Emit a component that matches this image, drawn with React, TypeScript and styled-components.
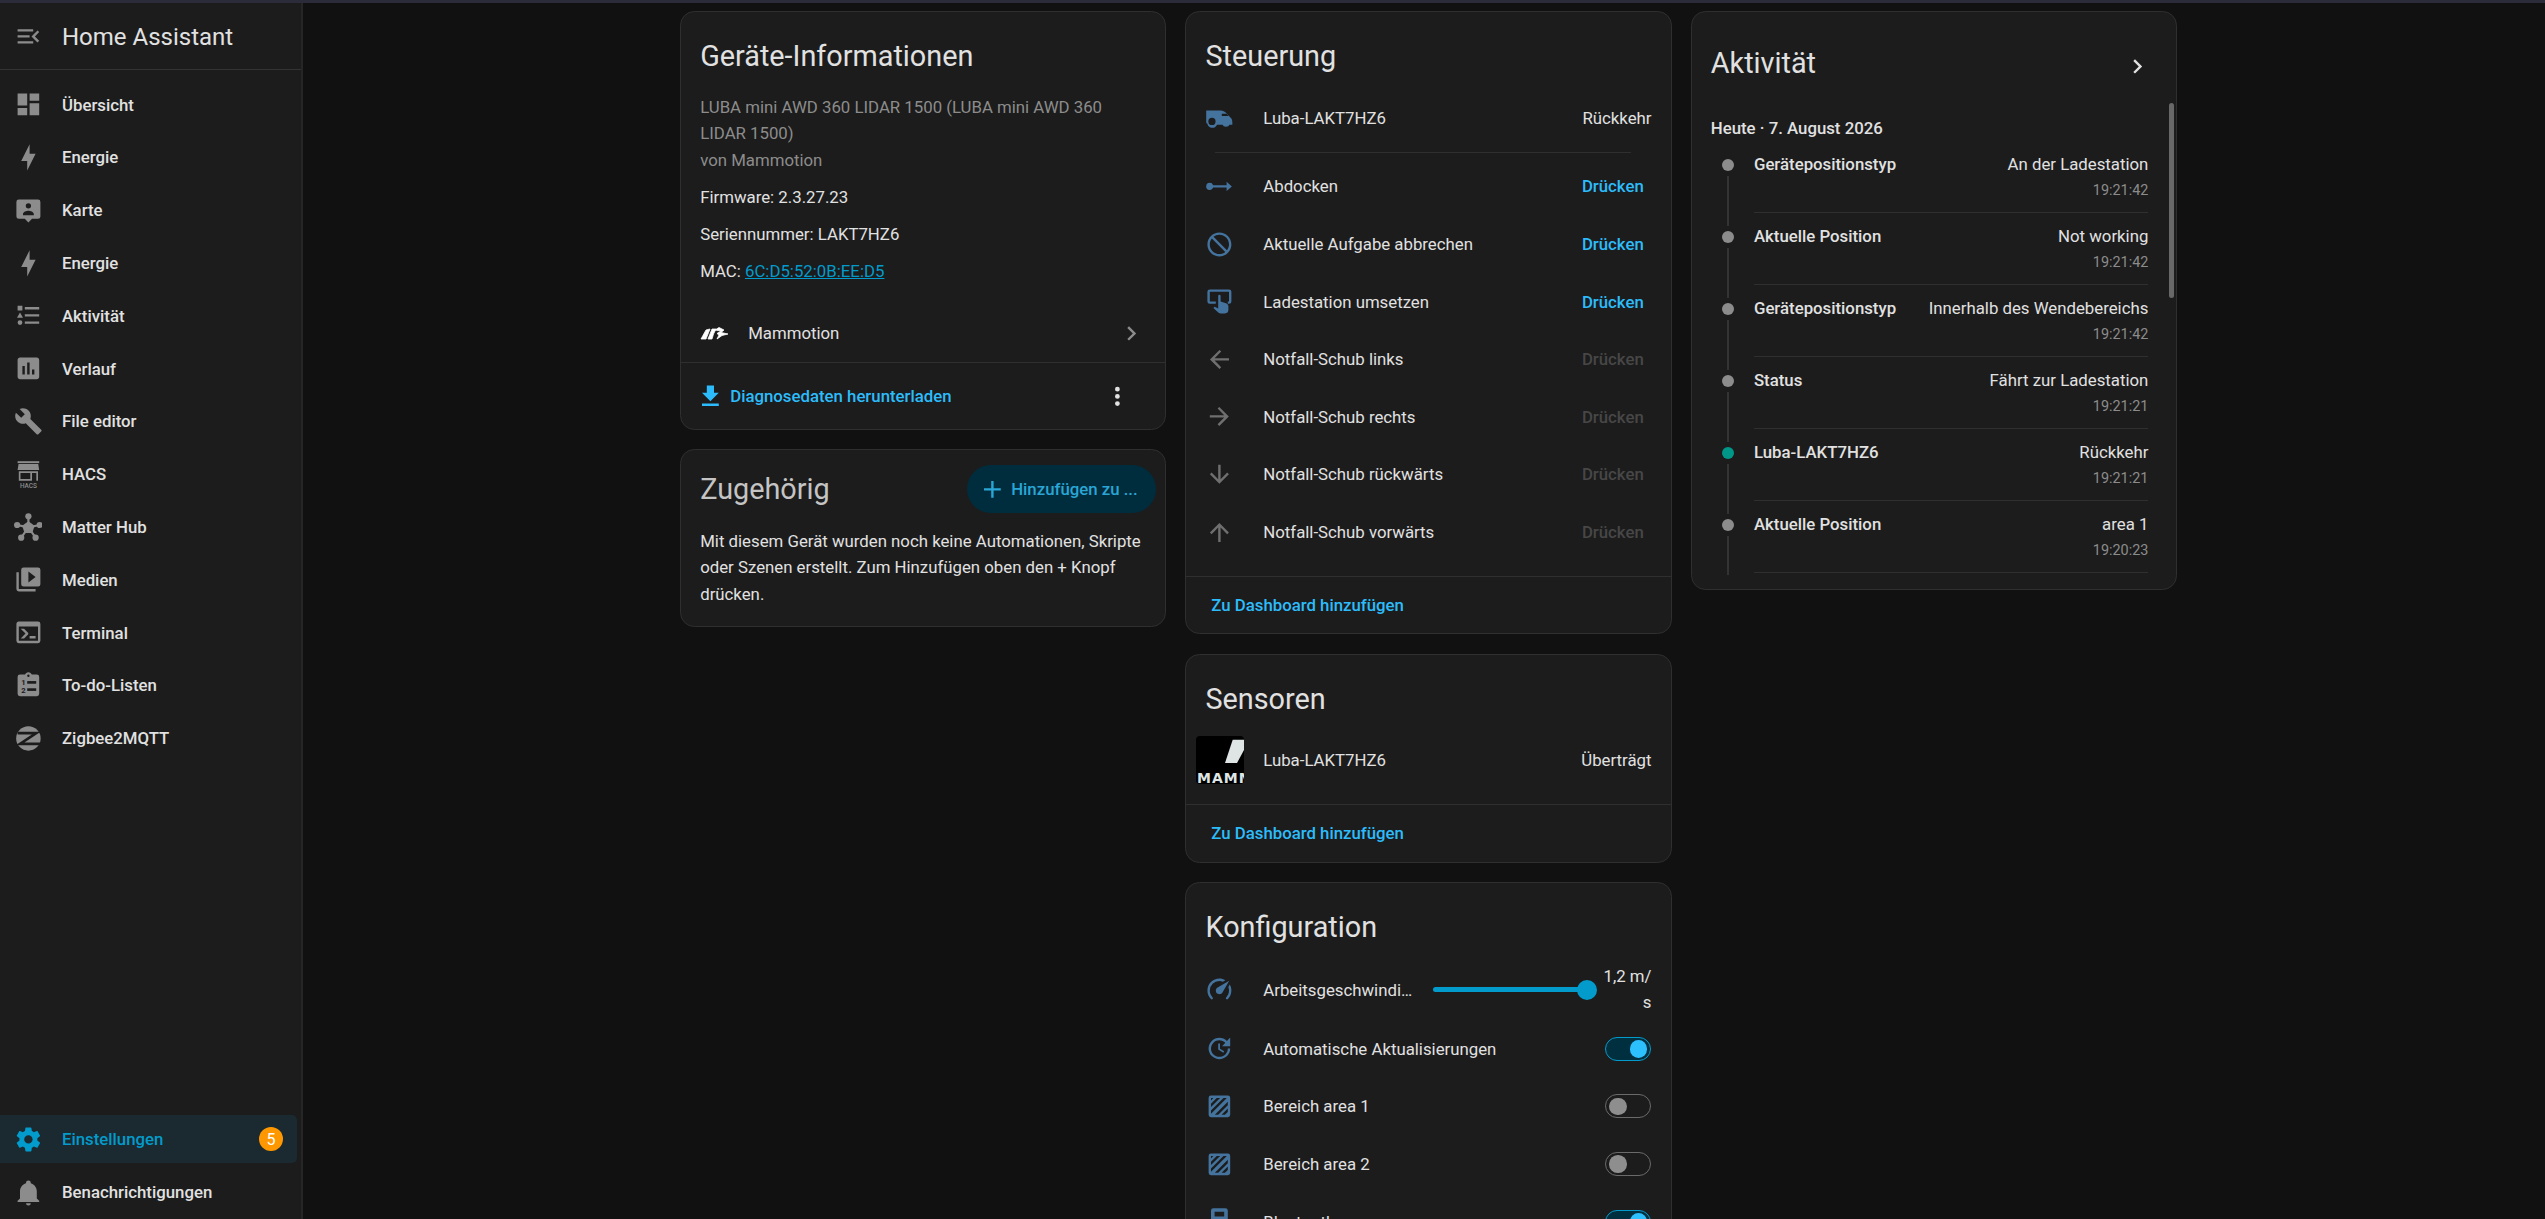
import React from 'react';
import styled, { createGlobalStyle } from 'styled-components';

const mdi = {
  menuOpen: 'M21,15.61L19.59,17L14.58,12L19.59,7L21,8.39L17.44,12L21,15.61M3,6H16V8H3V6M3,13V11H13V13H3M3,18V16H16V18H3Z',
  dashboard: 'M13,3V9H21V3M13,21H21V11H13M3,21H11V15H3M3,13H11V3H3V13Z',
  bolt: 'M11 15H6L13 1V9H18L11 23V15Z',
  map: 'M4 3H20A2 2 0 0 1 22 5V17A2 2 0 0 1 20 19H15L12 22L9 19H4A2 2 0 0 1 2 17V5A2 2 0 0 1 4 3ZM12 6A2.2 2.2 0 1 0 12 10.4 2.2 2.2 0 0 0 12 6ZM7.5 16H16.5V15C16.5 13.2 13.5 12.2 12 12.2 10.5 12.2 7.5 13.2 7.5 15Z',
  list: 'M5,9.5L7.5,14H2.5L5,9.5M3,4H7V8H3V4M5,20A2,2 0 0,0 7,18A2,2 0 0,0 5,16A2,2 0 0,0 3,18A2,2 0 0,0 5,20M9,5V7H21V5H9M9,19H21V17H9V19M9,13H21V11H9V13Z',
  chart: 'M19 3H5C3.9 3 3 3.9 3 5V19C3 20.1 3.9 21 5 21H19C20.1 21 21 20.1 21 19V5C21 3.9 20.1 3 19 3M9 17H7V10H9V17M13 17H11V7H13V17M17 17H15V13H17V17Z',
  wrench: 'M22.7,19L13.6,9.9C14.5,7.6 14,4.9 12.1,3C10.1,1 7.1,0.6 4.7,1.7L9,6L6,9L1.6,4.7C0.4,7.1 0.9,10.1 2.9,12.1C4.8,14 7.5,14.5 9.8,13.6L18.9,22.7C19.3,23.1 19.9,23.1 20.3,22.7L22.6,20.4C23.1,20 23.1,19.3 22.7,19Z',
  media: 'M4,6H2V20A2,2 0 0,0 4,22H18V20H4V6M20,2H8A2,2 0 0,0 6,4V16A2,2 0 0,0 8,18H20A2,2 0 0,0 22,16V4A2,2 0 0,0 20,2M12,14.5V5.5L18,10L12,14.5Z',
  console: 'M20,19V7H4V19H20M20,3A2,2 0 0,1 22,5V19A2,2 0 0,1 20,21H4A2,2 0 0,1 2,19V5C2,3.89 2.9,3 4,3H20M13,17V15H18V17H13M9.58,13L5.57,9H8.4L11.7,12.3C12.09,12.69 12.09,13.33 11.7,13.72L8.42,17H5.59L9.58,13Z',
  clipboard: 'M19,3H14.82C14.4,1.84 13.3,1 12,1C10.7,1 9.6,1.84 9.18,3H5A2,2 0 0,0 3,5V19A2,2 0 0,0 5,21H19A2,2 0 0,0 21,19V5A2,2 0 0,0 19,3M12,3A1,1 0 0,1 13,4A1,1 0 0,1 12,5A1,1 0 0,1 11,4A1,1 0 0,1 12,3Z',
  cog: 'M12,15.5A3.5,3.5 0 0,1 8.5,12A3.5,3.5 0 0,1 12,8.5A3.5,3.5 0 0,1 15.5,12A3.5,3.5 0 0,1 12,15.5M19.43,12.97C19.47,12.65 19.5,12.33 19.5,12C19.5,11.67 19.47,11.34 19.43,11L21.54,9.37C21.73,9.22 21.78,8.95 21.66,8.73L19.66,5.27C19.54,5.05 19.27,4.96 19.05,5.05L16.56,6.05C16.04,5.66 15.5,5.32 14.87,5.07L14.5,2.42C14.46,2.18 14.25,2 14,2H10C9.75,2 9.54,2.18 9.5,2.42L9.13,5.07C8.5,5.32 7.96,5.66 7.44,6.05L4.95,5.05C4.73,4.96 4.46,5.05 4.34,5.27L2.34,8.73C2.21,8.95 2.27,9.22 2.46,9.37L4.57,11C4.53,11.34 4.5,11.67 4.5,12C4.5,12.33 4.53,12.65 4.57,12.97L2.46,14.63C2.27,14.78 2.21,15.05 2.34,15.27L4.34,18.73C4.46,18.95 4.73,19.03 4.95,18.95L7.44,17.94C7.96,18.34 8.5,18.68 9.13,18.93L9.5,21.58C9.54,21.82 9.75,22 10,22H14C14.25,22 14.46,21.82 14.5,21.58L14.87,18.93C15.5,18.67 16.04,18.34 16.56,17.94L19.05,18.95C19.27,19.03 19.54,18.95 19.66,18.73L21.66,15.27C21.78,15.05 21.73,14.78 21.54,14.63L19.43,12.97Z',
  bell: 'M21,19V20H3V19L5,17V11C5,7.9 7.03,5.17 10,4.29C10,4.19 10,4.1 10,4A2,2 0 0,1 12,2A2,2 0 0,1 14,4C14,4.1 14,4.19 14,4.29C16.97,5.17 19,7.9 19,11V17L21,19M14,21A2,2 0 0,1 12,23A2,2 0 0,1 10,21',
  download: 'M5,20H19V18H5M19,9H15V3H9V9H5L12,16L19,9Z',
  dots: 'M12,16A2,2 0 0,1 14,18A2,2 0 0,1 12,20A2,2 0 0,1 10,18A2,2 0 0,1 12,16M12,10A2,2 0 0,1 14,12A2,2 0 0,1 12,14A2,2 0 0,1 10,12A2,2 0 0,1 12,10M12,4A2,2 0 0,1 14,6A2,2 0 0,1 12,8A2,2 0 0,1 10,6A2,2 0 0,1 12,4Z',
  chevron: 'M8.59,16.58L13.17,12L8.59,7.41L10,6L16,12L10,18L8.59,16.58Z',
  plus: 'M19,13H13V19H11V13H5V11H11V5H13V11H19V13Z',
  van: 'M1 5.5H13C15 5.5 17 6.5 19 9L22 12C22.6 13 22.8 14 22.8 16V17.2H20.4A3 2.4 0 0 1 14.6 17.2H10A4.2 4.2 0 0 1 2 16.4A1 1 0 0 1 1 15.5ZM14 8.2H18L19.6 10H14ZM5.8 11.5A3 3 0 1 0 5.8 17.5 3 3 0 0 0 5.8 11.5Z',
  ray: 'M4 9A3 3 0 0 1 6.8 11H18V8.2L22.4 12 18 15.8V13H6.8A3 3 0 1 1 4 9Z',
  cancel: 'M12 2C17.5 2 22 6.5 22 12S17.5 22 12 22 2 17.5 2 12 6.5 2 12 2M12 4C10.1 4 8.4 4.6 7.1 5.7L18.3 16.9C19.3 15.5 20 13.8 20 12C20 7.6 16.4 4 12 4M16.9 18.3L5.7 7.1C4.6 8.4 4 10.1 4 12C4 16.4 7.6 20 12 20C13.9 20 15.6 19.4 16.9 18.3Z',
  hand: 'M11 7.5A1 1 0 0 1 13 7.5V12L17.5 13.5C18.7 13.9 19.5 14.8 19.5 16.1V19A3 3 0 0 1 16.5 22H13C12 22 11.2 21.6 10.6 20.9L7 17.5L8 16.5L11 18Z',
  arrowLeft: 'M20,11V13H8L13.5,18.5L12.08,19.92L4.16,12L12.08,4.08L13.5,5.5L8,11H20Z',
  arrowRight: 'M4,11V13H16L10.5,18.5L11.92,19.92L19.84,12L11.92,4.08L10.5,5.5L16,11H4Z',
  arrowDown: 'M11,4H13V16L18.5,10.5L19.92,11.92L12,19.84L4.08,11.92L5.5,10.5L11,16V4Z',
  arrowUp: 'M13,20H11V8L5.5,13.5L4.08,12.08L12,4.16L19.92,12.08L18.5,13.5L13,8V20Z',
  speed: 'M12,16A3,3 0 0,1 9,13C9,11.88 9.61,10.9 10.5,10.39L20.21,4.77L14.68,14.35C14.18,15.33 13.17,16 12,16M12,3C13.81,3 15.5,3.5 16.97,4.32L14.87,5.53C14,5.19 13,5 12,5A8,8 0 0,0 4,13C4,15.21 4.89,17.21 6.34,18.65H6.35C6.74,19.04 6.74,19.67 6.35,20.06C5.96,20.45 5.32,20.45 4.93,20.07V20.07C3.12,18.26 2,15.76 2,13A10,10 0 0,1 12,3M22,13C22,15.76 20.88,18.26 19.07,20.07V20.07C18.68,20.45 18.05,20.45 17.66,20.06C17.27,19.67 17.27,19.04 17.66,18.65V18.65C19.11,17.2 20,15.21 20,13C20,12 19.81,11 19.46,10.1L20.67,8C21.5,9.5 22,11.18 22,13Z',
  update: 'M21,10.12H14.22L16.96,7.3C14.23,4.6 9.81,4.5 7.08,7.2C4.35,9.91 4.35,14.28 7.08,17C9.81,19.7 14.23,19.7 16.96,17C18.32,15.65 19,14.08 19,12.1H21C21,14.08 20.12,16.65 18.36,18.39C14.85,21.87 9.15,21.87 5.64,18.39C2.14,14.92 2.11,9.28 5.62,5.81C9.13,2.34 14.76,2.34 18.27,5.81L21,3V10.12M12.5,8V12.25L16,14.33L15.28,15.54L11,13V8H12.5Z',
  texture: 'M5 3H19A2 2 0 0 1 21 5V19A2 2 0 0 1 19 21H5A2 2 0 0 1 3 19V5A2 2 0 0 1 5 3ZM5 5V7L7 5ZM5 9.8V12.6L12.6 5H9.8ZM5 15.4V18.2L18.2 5H15.4ZM19 8.2L8.2 19H11L19 11ZM19 13.8L13.8 19H16.6L19 16.6Z',
  bluetooth: 'M7 1H17A2 2 0 0 1 19 3V21A2 2 0 0 1 17 23H7A2 2 0 0 1 5 21V3A2 2 0 0 1 7 1ZM8 4V8H16V4Z',
};

const BLUE = '#44739e';
const GRAY = '#8c8c8c';
const PRIMARY = '#2cbcfb';
const ACTIVE = '#039bcb';

const Global = createGlobalStyle`
  html, body { margin: 0; padding: 0; background: #111111; }
  body {
    font-family: Roboto, 'Liberation Sans', sans-serif;
    font-size: 16.8px;
    color: #e1e1e1;
    overflow: hidden;
  }
  * { box-sizing: border-box; }
`;

const Page = styled.div`
  height: 100vh;
  display: flex;
  flex-direction: column;
  overflow: hidden;
`;

const TopStrip = styled.div`
  height: 3px;
  flex: none;
  background: #2b2b3a;
`;

const Shell = styled.div`
  flex: 1;
  min-height: 0;
  display: flex;
`;

const Sidebar = styled.nav`
  width: 303px;
  flex: none;
  display: flex;
  flex-direction: column;
  background: #1c1c1c;
  border-right: 2px solid #262626;
  padding-bottom: 3px;
`;

const SideHeader = styled.div`
  height: 67px;
  display: flex;
  align-items: center;
  padding-left: 13.6px;
  border-bottom: 1px solid #333333;
  margin-bottom: 10.6px;
`;

const SideTitle = styled.div`
  margin: 2px 0 0 19.6px;
  font-size: 24px;
  color: #e1e1e1;
`;

const SideList = styled.div`
  display: flex;
  flex-direction: column;
  gap: 4.8px;
`;

const SideFoot = styled(SideList)`
  margin-top: auto;
`;

const SideItem = styled.div<{ $active?: boolean }>`
  height: 48px;
  width: 297px;
  display: flex;
  align-items: center;
  padding-left: 13.6px;
  border-radius: 0 5px 5px 0;
  background: ${p => (p.$active ? '#1a2a30' : 'transparent')};
  color: ${p => (p.$active ? ACTIVE : '#e1e1e1')};
  font-weight: 500;
  font-size: 16.8px;
`;

const SideLabel = styled.span`
  margin-left: 19.6px;
  flex: 1;
`;

const Badge = styled.span`
  width: 24px;
  height: 24px;
  border-radius: 50%;
  margin-right: 14px;
  background: #ff9800;
  color: #ffffff;
  font-size: 16px;
  font-weight: 400;
  display: flex;
  align-items: center;
  justify-content: center;
`;

const Svg = styled.svg<{ $color: string; $size?: number }>`
  width: ${p => p.$size ?? 28.8}px;
  height: ${p => p.$size ?? 28.8}px;
  flex: none;
  fill: ${p => p.$color};
  display: block;
`;

const Icon = ({ d, color = GRAY, size }: { d: string; color?: string; size?: number }) => (
  <Svg viewBox="0 0 24 24" $color={color} $size={size}>
    <path d={d} fillRule="evenodd" />
  </Svg>
);

const HacsText = styled.text`
  font-family: Roboto, sans-serif;
  font-size: 5.4px;
  text-anchor: middle;
  fill: ${GRAY};
`;

const HacsIcon = () => (
  <Svg viewBox="0 0 24 24" $color={GRAY}>
    <rect x="3" y="1" width="18" height="1.6" />
    <path d="M3.8 3.4H20.2L21 8.4H3Z" />
    <path d="M4 9.4H20V17.2H18.6V10.8H15V17.2H4ZM5.4 10.8V15.8H13.6V10.8Z" fillRule="evenodd" />
    <HacsText x="12" y="23">HACS</HacsText>
  </Svg>
);

const HubLines = styled.path`
  fill: none;
  stroke: ${GRAY};
  stroke-width: 1.8;
`;

const HubIcon = () => (
  <Svg viewBox="0 0 24 24" $color={GRAY}>
    <circle cx="12" cy="2.8" r="2.6" />
    <circle cx="2.6" cy="10" r="2.6" />
    <circle cx="21.4" cy="10" r="2.6" />
    <circle cx="6" cy="20.6" r="2.6" />
    <circle cx="18" cy="20.6" r="2.6" />
    <path d="M12 6.8L17.2 10.6 15.2 16.6H8.8L6.8 10.6Z" />
    <HubLines d="M12 3V12M2.6 10L12 12M21.4 10L12 12M6 20.6L12 12M18 20.6L12 12" />
  </Svg>
);

const TodoDigit = styled.text`
  font-family: Roboto, sans-serif;
  font-size: 6.4px;
  font-weight: 700;
  fill: #1c1c1c;
`;

const TodoBar = styled.rect`
  fill: #1c1c1c;
`;

const TodoIcon = () => (
  <Svg viewBox="0 0 24 24" $color={GRAY}>
    <path d={mdi.clipboard} fillRule="evenodd" />
    <TodoDigit x="6" y="12">1</TodoDigit>
    <TodoDigit x="6" y="18.6">2</TodoDigit>
    <TodoBar x="11" y="8.4" width="7.5" height="2.2" />
    <TodoBar x="11" y="14.4" width="7.5" height="2.2" />
  </Svg>
);

const ZigbeeStroke = styled.path`
  fill: none;
  stroke: #1c1c1c;
  stroke-width: 2.2;
`;

const ZigbeeIcon = () => (
  <Svg viewBox="0 0 24 24" $color={GRAY}>
    <circle cx="12" cy="12" r="10.2" />
    <ZigbeeStroke d="M3 7.6H18.6L5 16.6H22" />
  </Svg>
);

const RelocateFrame = styled.path`
  fill: none;
  stroke: ${BLUE};
  stroke-width: 2;
`;

const RelocateIcon = () => (
  <Svg viewBox="0 0 24 24" $color={BLUE}>
    <RelocateFrame d="M9 13H4A1 1 0 0 1 3 12V4A1 1 0 0 1 4 3H20A1 1 0 0 1 21 4V12A1 1 0 0 1 20 13H19" />
    <path d={mdi.hand} />
  </Svg>
);

const LogoSvg = styled.svg`
  width: 28px;
  height: 13px;
  flex: none;
  fill: #ffffff;
  stroke: #ffffff;
  stroke-width: 0.8;
`;

const MammotionLogo = () => (
  <LogoSvg viewBox="0 0 28 13">
    <polygon points="1,12 6,3 10,2 6,12" />
    <polygon points="8,12 12,2 16,2 13.5,7 12,12" />
    <polygon points="15,3 19,0.5 24,3 21,5.5 28,7 22,8.5 17,12 19,8 17,6.5 21,4" />
  </LogoSvg>
);

const BrandImage = styled.svg`
  width: 48px;
  height: 48px;
  flex: none;
  border-radius: 4px;
  background: #000000;
`;

const BrandText = styled.text`
  font-family: 'DejaVu Sans', sans-serif;
  font-weight: 700;
  font-size: 14px;
  letter-spacing: 1px;
  fill: #dfe5e5;
`;

const BrandSlash = styled.polygon`
  fill: #dfe5e5;
`;

const BrandIcon = () => (
  <BrandImage viewBox="0 0 48 48">
    <BrandSlash points="36.7,3.7 48,3.7 48,14 41,27 29,27" />
    <BrandText x="1" y="47">MAMMOTION</BrandText>
  </BrandImage>
);

const Main = styled.main`
  flex: 1;
  min-width: 0;
  padding: 8.4px 0 0 377px;
  display: grid;
  grid-template-columns: repeat(3, 486.4px);
  column-gap: 18.9px;
  align-items: start;
  overflow: hidden;
`;

const Column = styled.div`
  display: flex;
  flex-direction: column;
  gap: 19.2px;
`;

const Card = styled.section`
  position: relative;
  background: #1c1c1c;
  border: 1px solid #2f2f2f;
  border-radius: 14.4px;
  overflow: hidden;
`;

const CardTitle = styled.h2`
  margin: 0;
  padding: 25px 19.2px 0;
  font-size: 28.8px;
  font-weight: 400;
  line-height: 38.4px;
  color: #e1e1e1;
`;

const Info = styled.div`
  padding: 17.8px 19.2px 19.4px;
  line-height: 26.88px;
`;

const InfoMuted = styled.div`
  color: #8c8c8c;
`;

const InfoLine = styled.div`
  margin-top: 10px;
`;

const MacLink = styled.a`
  color: ${ACTIVE};
  text-decoration: underline;
`;

const BrandRow = styled.div`
  height: 57.6px;
  padding: 0 19.2px;
  display: flex;
  align-items: center;
`;

const BrandLabel = styled.span`
  margin-left: 20px;
  flex: 1;
`;

const CardFoot = styled.div`
  height: 67.2px;
  border-top: 1px solid #2f2f2f;
  padding: 0 34px 0 15.4px;
  display: flex;
  align-items: center;
`;

const FootAction = styled.span`
  margin-left: 5px;
  flex: 1;
  color: ${PRIMARY};
  font-weight: 500;
`;

const RelatedHead = styled.div`
  height: 63px;
  padding: 15px 9.6px 0 19.2px;
  display: flex;
  align-items: flex-start;
  justify-content: space-between;
`;

const RelatedTitle = styled.h2`
  margin: 0;
  font-size: 28.8px;
  font-weight: 400;
  line-height: 48px;
  color: #c4c4c4;
`;

const AddButton = styled.div`
  width: 189px;
  height: 48px;
  border-radius: 24px;
  background: #002d3d;
  color: #2aa6d6;
  font-weight: 500;
  display: flex;
  align-items: center;
  padding-left: 11px;
`;

const AddLabel = styled.span`
  margin-left: 4.6px;
`;

const RelatedText = styled.p`
  margin: 14.6px 0 0;
  padding: 0 19.2px 19.2px;
  line-height: 26.4px;
  color: #e1e1e1;
`;

const Rows = styled.div`
  padding: 13.4px 0 15px;
`;

const Row = styled.div<{ $grow?: number }>`
  height: ${p => p.$grow ?? 57.6}px;
  padding: 0 19.2px;
  display: flex;
  align-items: center;
`;

const RowIcon = styled.div`
  width: 28.8px;
  flex: none;
  display: flex;
  justify-content: center;
`;

const RowLabel = styled.div`
  margin-left: 29px;
  flex: 1;
  min-width: 0;
  white-space: nowrap;
`;

const RowValue = styled.div`
  text-align: right;
`;

const PressLabel = styled.div<{ $disabled?: boolean }>`
  margin-right: 7.7px;
  font-weight: 500;
  color: ${p => (p.$disabled ? '#474747' : PRIMARY)};
`;

const RowRule = styled.div`
  height: 1px;
  margin: 5px 40px 4.8px 28.6px;
  background: #2f2f2f;
`;

const AddToDash = styled.div`
  height: 57.6px;
  border-top: 1px solid #2f2f2f;
  padding-left: 25px;
  display: flex;
  align-items: center;
  color: ${PRIMARY};
  font-weight: 500;
`;

const SliderLabel = styled(RowLabel)`
  flex: none;
  width: 152px;
  overflow: hidden;
  text-overflow: ellipsis;
`;

const SliderTrack = styled.div`
  position: relative;
  width: 154px;
  height: 5px;
  margin-left: 18px;
  flex: none;
  border-radius: 3px;
  background: ${ACTIVE};
`;

const SliderThumb = styled.div`
  position: absolute;
  right: -10px;
  top: -7.5px;
  width: 20px;
  height: 20px;
  border-radius: 50%;
  background: ${ACTIVE};
`;

const SliderValue = styled.div`
  margin-left: auto;
  width: 48px;
  text-align: right;
  line-height: 25.6px;
`;

const Toggle = styled.div<{ $on?: boolean }>`
  width: 46px;
  height: 24px;
  flex: none;
  border-radius: 12px;
  border: 1px solid ${p => (p.$on ? ACTIVE : '#6a6a6a')};
  background: ${p => (p.$on ? '#003040' : 'transparent')};
  display: flex;
  align-items: center;
  justify-content: ${p => (p.$on ? 'flex-end' : 'flex-start')};
  padding: 0 3px;
`;

const ToggleKnob = styled.div<{ $on?: boolean }>`
  width: 17.5px;
  height: 17.5px;
  border-radius: 50%;
  background: ${p => (p.$on ? '#2cc0ff' : '#8e8e8e')};
`;

const ActivityHead = styled.div`
  padding: 31.4px 24px 0 19.2px;
  display: flex;
  justify-content: space-between;
`;

const ActivityTitle = styled.h2`
  margin: 0;
  font-size: 28.8px;
  font-weight: 400;
  line-height: 38.4px;
`;

const ActivityChevron = styled.div`
  margin-top: 8px;
`;

const DayHeading = styled.div`
  margin-top: 32.4px;
  padding-left: 19.2px;
  font-weight: 500;
  line-height: 26.88px;
`;

const Timeline = styled.div`
  height: 434px;
  margin-bottom: 14px;
  padding: 0 27.6px 0 24px;
  overflow: hidden;
`;

const Entry = styled.div`
  height: 72px;
  display: flex;
`;

const Rail = styled.div`
  width: 24px;
  flex: none;
  height: 72px;
  padding-top: 18px;
  display: flex;
  flex-direction: column;
  align-items: center;
`;

const Dot = styled.div<{ $on?: boolean }>`
  width: 12px;
  height: 12px;
  flex: none;
  border-radius: 50%;
  background: ${p => (p.$on ? '#009688' : '#8c8c8c')};
`;

const RailLine = styled.div`
  width: 2px;
  height: 50px;
  flex: none;
  margin-top: 5px;
  background: #333333;
`;

const EntryBody = styled.div`
  margin-left: 14.4px;
  flex: 1;
  min-width: 0;
  padding-top: 9.6px;
  border-bottom: 1px solid #2f2f2f;
  display: flex;
  justify-content: space-between;
`;

const EntryName = styled.div`
  font-weight: 500;
  line-height: 26.88px;
  white-space: nowrap;
`;

const EntryState = styled.div`
  text-align: right;
  line-height: 26.88px;
  white-space: nowrap;
`;

const EntryTime = styled.div`
  font-size: 14.4px;
  line-height: 25px;
  color: #8c8c8c;
`;

const ScrollThumb = styled.div`
  position: absolute;
  right: 1.6px;
  top: 91px;
  width: 5px;
  height: 194.5px;
  border-radius: 3px;
  background: #686868;
`;

const sideTop: { label: string; icon: React.ReactNode }[] = [
  { label: 'Übersicht', icon: <Icon d={mdi.dashboard} /> },
  { label: 'Energie', icon: <Icon d={mdi.bolt} /> },
  { label: 'Karte', icon: <Icon d={mdi.map} /> },
  { label: 'Energie', icon: <Icon d={mdi.bolt} /> },
  { label: 'Aktivität', icon: <Icon d={mdi.list} /> },
  { label: 'Verlauf', icon: <Icon d={mdi.chart} /> },
  { label: 'File editor', icon: <Icon d={mdi.wrench} /> },
  { label: 'HACS', icon: <HacsIcon /> },
  { label: 'Matter Hub', icon: <HubIcon /> },
  { label: 'Medien', icon: <Icon d={mdi.media} /> },
  { label: 'Terminal', icon: <Icon d={mdi.console} /> },
  { label: 'To-do-Listen', icon: <TodoIcon /> },
  { label: 'Zigbee2MQTT', icon: <ZigbeeIcon /> },
];

const controls = [
  { label: 'Abdocken', icon: <Icon d={mdi.ray} color={BLUE} /> },
  { label: 'Aktuelle Aufgabe abbrechen', icon: <Icon d={mdi.cancel} color={BLUE} /> },
  { label: 'Ladestation umsetzen', icon: <RelocateIcon /> },
  { label: 'Notfall-Schub links', icon: <Icon d={mdi.arrowLeft} color="#6f6f6f" />, disabled: true },
  { label: 'Notfall-Schub rechts', icon: <Icon d={mdi.arrowRight} color="#6f6f6f" />, disabled: true },
  { label: 'Notfall-Schub rückwärts', icon: <Icon d={mdi.arrowDown} color="#6f6f6f" />, disabled: true },
  { label: 'Notfall-Schub vorwärts', icon: <Icon d={mdi.arrowUp} color="#6f6f6f" />, disabled: true },
];

const activity = [
  { name: 'Gerätepositionstyp', state: 'An der Ladestation', time: '19:21:42' },
  { name: 'Aktuelle Position', state: 'Not working', time: '19:21:42' },
  { name: 'Gerätepositionstyp', state: 'Innerhalb des Wendebereichs', time: '19:21:42' },
  { name: 'Status', state: 'Fährt zur Ladestation', time: '19:21:21' },
  { name: 'Luba-LAKT7HZ6', state: 'Rückkehr', time: '19:21:21', on: true },
  { name: 'Aktuelle Position', state: 'area 1', time: '19:20:23' },
];

export default function App() {
  return (
    <Page>
      <Global />
      <TopStrip />
      <Shell>
        <Sidebar>
          <SideHeader>
            <Icon d={mdi.menuOpen} />
            <SideTitle>Home Assistant</SideTitle>
          </SideHeader>
          <SideList>
            {sideTop.map((item, i) => (
              <SideItem key={i}>
                {item.icon}
                <SideLabel>{item.label}</SideLabel>
              </SideItem>
            ))}
          </SideList>
          <SideFoot>
            <SideItem $active>
              <Icon d={mdi.cog} color={ACTIVE} />
              <SideLabel>Einstellungen</SideLabel>
              <Badge>5</Badge>
            </SideItem>
            <SideItem>
              <Icon d={mdi.bell} />
              <SideLabel>Benachrichtigungen</SideLabel>
            </SideItem>
          </SideFoot>
        </Sidebar>
        <Main>
          <Column>
            <Card>
              <CardTitle>Geräte-Informationen</CardTitle>
              <Info>
                <InfoMuted>LUBA mini AWD 360 LIDAR 1500 (LUBA mini AWD 360 LIDAR 1500)</InfoMuted>
                <InfoMuted>von Mammotion</InfoMuted>
                <InfoLine>Firmware: 2.3.27.23</InfoLine>
                <InfoLine>Seriennummer: LAKT7HZ6</InfoLine>
                <InfoLine>
                  MAC: <MacLink>6C:D5:52:0B:EE:D5</MacLink>
                </InfoLine>
              </Info>
              <BrandRow>
                <MammotionLogo />
                <BrandLabel>Mammotion</BrandLabel>
                <Icon d={mdi.chevron} />
              </BrandRow>
              <CardFoot>
                <Icon d={mdi.download} color={PRIMARY} />
                <FootAction>Diagnosedaten herunterladen</FootAction>
                <Icon d={mdi.dots} color="#e1e1e1" />
              </CardFoot>
            </Card>
            <Card>
              <RelatedHead>
                <RelatedTitle>Zugehörig</RelatedTitle>
                <AddButton>
                  <Icon d={mdi.plus} color="#2aa6d6" />
                  <AddLabel>Hinzufügen zu ...</AddLabel>
                </AddButton>
              </RelatedHead>
              <RelatedText>
                Mit diesem Gerät wurden noch keine Automationen, Skripte oder Szenen erstellt. Zum Hinzufügen oben den + Knopf drücken.
              </RelatedText>
            </Card>
          </Column>

          <Column>
            <Card>
              <CardTitle>Steuerung</CardTitle>
              <Rows>
                <Row>
                  <RowIcon><Icon d={mdi.van} color={BLUE} /></RowIcon>
                  <RowLabel>Luba-LAKT7HZ6</RowLabel>
                  <RowValue>Rückkehr</RowValue>
                </Row>
                <RowRule />
                {controls.map(c => (
                  <Row key={c.label}>
                    <RowIcon>{c.icon}</RowIcon>
                    <RowLabel>{c.label}</RowLabel>
                    <PressLabel $disabled={c.disabled}>Drücken</PressLabel>
                  </Row>
                ))}
              </Rows>
              <AddToDash>Zu Dashboard hinzufügen</AddToDash>
            </Card>
            <Card>
              <CardTitle>Sensoren</CardTitle>
              <Rows>
                <Row>
                  <RowIcon><BrandIcon /></RowIcon>
                  <RowLabel>Luba-LAKT7HZ6</RowLabel>
                  <RowValue>Überträgt</RowValue>
                </Row>
              </Rows>
              <AddToDash>Zu Dashboard hinzufügen</AddToDash>
            </Card>
            <Card>
              <CardTitle>Konfiguration</CardTitle>
              <Rows>
                <Row $grow={60.6}>
                  <RowIcon><Icon d={mdi.speed} color={BLUE} /></RowIcon>
                  <SliderLabel>Arbeitsgeschwindigkeit</SliderLabel>
                  <SliderTrack><SliderThumb /></SliderTrack>
                  <SliderValue>1,2 m/ s</SliderValue>
                </Row>
                <Row>
                  <RowIcon><Icon d={mdi.update} color={BLUE} /></RowIcon>
                  <RowLabel>Automatische Aktualisierungen</RowLabel>
                  <Toggle $on><ToggleKnob $on /></Toggle>
                </Row>
                <Row>
                  <RowIcon><Icon d={mdi.texture} color={BLUE} /></RowIcon>
                  <RowLabel>Bereich area 1</RowLabel>
                  <Toggle><ToggleKnob /></Toggle>
                </Row>
                <Row>
                  <RowIcon><Icon d={mdi.texture} color={BLUE} /></RowIcon>
                  <RowLabel>Bereich area 2</RowLabel>
                  <Toggle><ToggleKnob /></Toggle>
                </Row>
                <Row>
                  <RowIcon><Icon d={mdi.bluetooth} color={BLUE} /></RowIcon>
                  <RowLabel>Bluetooth</RowLabel>
                  <Toggle $on><ToggleKnob $on /></Toggle>
                </Row>
              </Rows>
            </Card>
          </Column>

          <Column>
            <Card>
              <ActivityHead>
                <ActivityTitle>Aktivität</ActivityTitle>
                <ActivityChevron><Icon d={mdi.chevron} color="#e1e1e1" /></ActivityChevron>
              </ActivityHead>
              <DayHeading>Heute · 7. August 2026</DayHeading>
              <Timeline>
                {activity.map((a, i) => (
                  <Entry key={i}>
                    <Rail>
                      <Dot $on={a.on} />
                      <RailLine />
                    </Rail>
                    <EntryBody>
                      <EntryName>{a.name}</EntryName>
                      <EntryState>
                        {a.state}
                        <EntryTime>{a.time}</EntryTime>
                      </EntryState>
                    </EntryBody>
                  </Entry>
                ))}
              </Timeline>
              <ScrollThumb />
            </Card>
          </Column>
        </Main>
      </Shell>
    </Page>
  );
}
